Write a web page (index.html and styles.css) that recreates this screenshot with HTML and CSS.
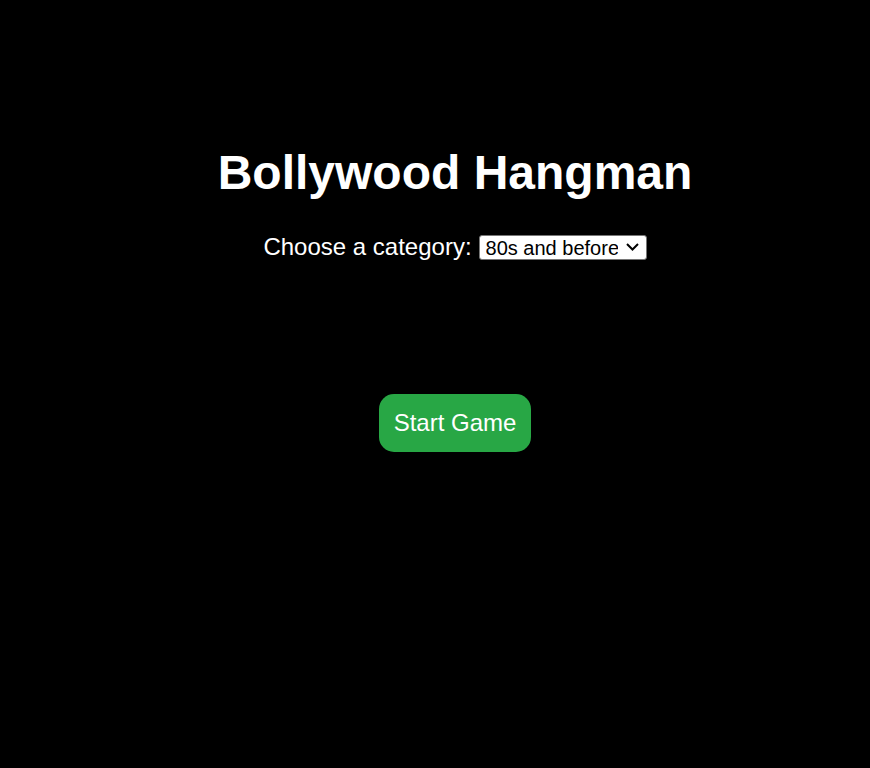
FILE: index.html
```html
<!DOCTYPE html>
<html>
<head>
  <link rel="stylesheet" href="styles.css">
</head>
<body>
  <div class="game-wrapper">
    <h1 class="game-title">Bollywood Hangman</h1>

    <!-- Category picker -->
    <div class="category-row">
      <label for="category" class="category-label">Choose a category:</label>
      <select id="category" class="category-select">
        <option value="80s">80s and before</option>
        <option value="90s">90s</option>
        <option value="2000s">2000s</option>
        <option value="2010s">2010s and after</option>
      </select>
    </div>

    <button class="start-btn">Start Game</button>
  </div>
</body>
</html>
```

FILE: styles.css
```css
* {
  margin: 0;
  padding: 0;
  box-sizing: border-box;
}

body {
  background: #000;
  color: #fff;
  font-family: "Liberation Sans", Arial, sans-serif;
}

.game-wrapper {
  display: flex;
  flex-direction: column;
  align-items: center;
  padding: 145px 0 0 40px;
}

.game-title {
  font-size: 48px;
  font-weight: bold;
  margin-bottom: 33px;
}

.category-row {
  display: flex;
  align-items: center;
  gap: 7px;
  font-size: 24px;
}

/* custom chevron instead of the native arrow */
.category-select {
  appearance: none;
  -webkit-appearance: none;
  width: 168px;
  height: 25px;
  padding: 1px 28px 0 6px;
  font-family: "Liberation Sans", Arial, sans-serif;
  font-size: 20px;
  color: #000;
  background-color: #fff;
  background-image: url("data:image/svg+xml,%3Csvg xmlns='http://www.w3.org/2000/svg' width='13' height='8' viewBox='0 0 13 8'%3E%3Cpath d='M1 1l5.5 5.5L12 1' fill='none' stroke='%23000' stroke-width='2'/%3E%3C/svg%3E");
  background-repeat: no-repeat;
  background-position: right 7px center;
  border: 1px solid #767676;
  border-radius: 3px;
}

.start-btn {
  margin-top: 133px;
  padding: 15px;
  font-family: "Liberation Sans", Arial, sans-serif;
  font-size: 24px;
  color: #fff;
  background: #28a745;
  border: none;
  border-radius: 15px;
  cursor: pointer;
}
```
